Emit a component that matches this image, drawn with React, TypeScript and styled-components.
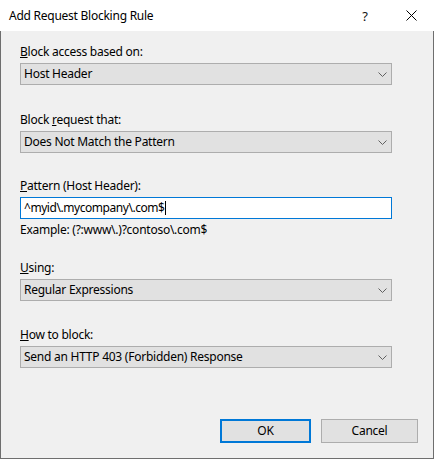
import styled, { createGlobalStyle } from "styled-components";

const GlobalStyle = createGlobalStyle`
  html, body {
    margin: 0;
    padding: 0;
    background: #f0f0f0;
  }
  body {
    font-family: "Noto Sans", "Segoe UI", sans-serif;
    font-size: 12px;
    letter-spacing: -0.25px;
    color: #000;
  }
`;

const Window = styled.div`
  width: 434px;
  height: 459px;
  box-sizing: border-box;
  display: flex;
  flex-direction: column;
  background: #f0f0f0;
`;

const TitleBar = styled.div`
  height: 31px;
  flex: none;
  background: #fff;
  display: flex;
  align-items: center;
`;

const Title = styled.div`
  flex: 1;
  padding-left: 9px;
  line-height: 16px;
`;

const CaptionButton = styled.div`
  width: 46px;
  height: 31px;
  display: flex;
  align-items: center;
  justify-content: center;
  font-size: 13px;
  color: #111;
`;

const Body = styled.div`
  flex: 1;
  border: 1px solid #6e6e6e;
  border-top: none;
  padding: 13px 15px 15px 19px;
  display: flex;
  flex-direction: column;
`;

const Field = styled.div<{ $top: number }>`
  width: 372px;
  margin-top: ${(p) => p.$top}px;
  display: flex;
  flex-direction: column;
`;

const Label = styled.div`
  line-height: 16px;
  margin-bottom: 3px;
  white-space: nowrap;
`;

const Combo = styled.div`
  height: 22px;
  box-sizing: border-box;
  border: 1px solid #adadad;
  background: #e1e1e1;
  display: flex;
  align-items: center;
  padding: 0 4px 0 3px;
  line-height: 16px;
`;

const ComboText = styled.span`
  flex: 1;
  white-space: nowrap;
`;

const TextBox = styled.div`
  height: 22px;
  box-sizing: border-box;
  border: 1px solid #0078d7;
  background: #fff;
  display: flex;
  align-items: center;
  padding: 0 3px;
  line-height: 16px;
  letter-spacing: -0.45px;
  white-space: nowrap;
`;

const Caret = styled.span`
  display: inline-block;
  width: 1px;
  height: 14px;
  background: #000;
  margin-left: 1px;
`;

const Hint = styled.div`
  margin-top: 3px;
  line-height: 16px;
  white-space: nowrap;
`;

const ButtonRow = styled.div`
  margin-top: auto;
  display: flex;
  justify-content: flex-end;
  gap: 10px;
`;

const Button = styled.div<{ $width: number; $default?: boolean }>`
  width: ${(p) => p.$width}px;
  height: 24px;
  box-sizing: border-box;
  background: #e1e1e1;
  border: ${(p) => (p.$default ? "2px solid #0078d7" : "1px solid #adadad")};
  display: flex;
  align-items: center;
  justify-content: center;
  line-height: 16px;
`;

function Chevron() {
  return (
    <svg width="9" height="5" viewBox="0 0 9 5">
      <polyline points="0.5,0.5 4.5,4.5 8.5,0.5" fill="none" stroke="#606060" strokeWidth="1" />
    </svg>
  );
}

function CloseIcon() {
  return (
    <svg width="11" height="11" viewBox="0 0 11 11">
      <path d="M0.5 0.5 L10.5 10.5 M10.5 0.5 L0.5 10.5" stroke="#000" strokeWidth="1" />
    </svg>
  );
}

function ComboBox({ value }: { value: string }) {
  return (
    <Combo>
      <ComboText>{value}</ComboText>
      <Chevron />
    </Combo>
  );
}

export default function App() {
  return (
    <>
      <GlobalStyle />
      <Window>
        <TitleBar>
          <Title>Add Request Blocking Rule</Title>
          <CaptionButton>?</CaptionButton>
          <CaptionButton>
            <CloseIcon />
          </CaptionButton>
        </TitleBar>
        <Body>
          <Field $top={0}>
            <Label>
              <u>B</u>lock access based on:
            </Label>
            <ComboBox value="Host Header" />
          </Field>
          <Field $top={27}>
            <Label>
              Block <u>r</u>equest that:
            </Label>
            <ComboBox value="Does Not Match the Pattern" />
          </Field>
          <Field $top={25}>
            <Label>
              <u>P</u>attern (Host Header):
            </Label>
            <TextBox>
              ^myid\.mycompany\.com$
              <Caret />
            </TextBox>
            <Hint>Example: (?:www\.)?contoso\.com$</Hint>
          </Field>
          <Field $top={22}>
            <Label>
              <u>U</u>sing:
            </Label>
            <ComboBox value="Regular Expressions" />
          </Field>
          <Field $top={26}>
            <Label>
              <u>H</u>ow to block:
            </Label>
            <ComboBox value="Send an HTTP 403 (Forbidden) Response" />
          </Field>
          <ButtonRow>
            <Button $width={91} $default>
              OK
            </Button>
            <Button $width={97}>Cancel</Button>
          </ButtonRow>
        </Body>
      </Window>
    </>
  );
}
